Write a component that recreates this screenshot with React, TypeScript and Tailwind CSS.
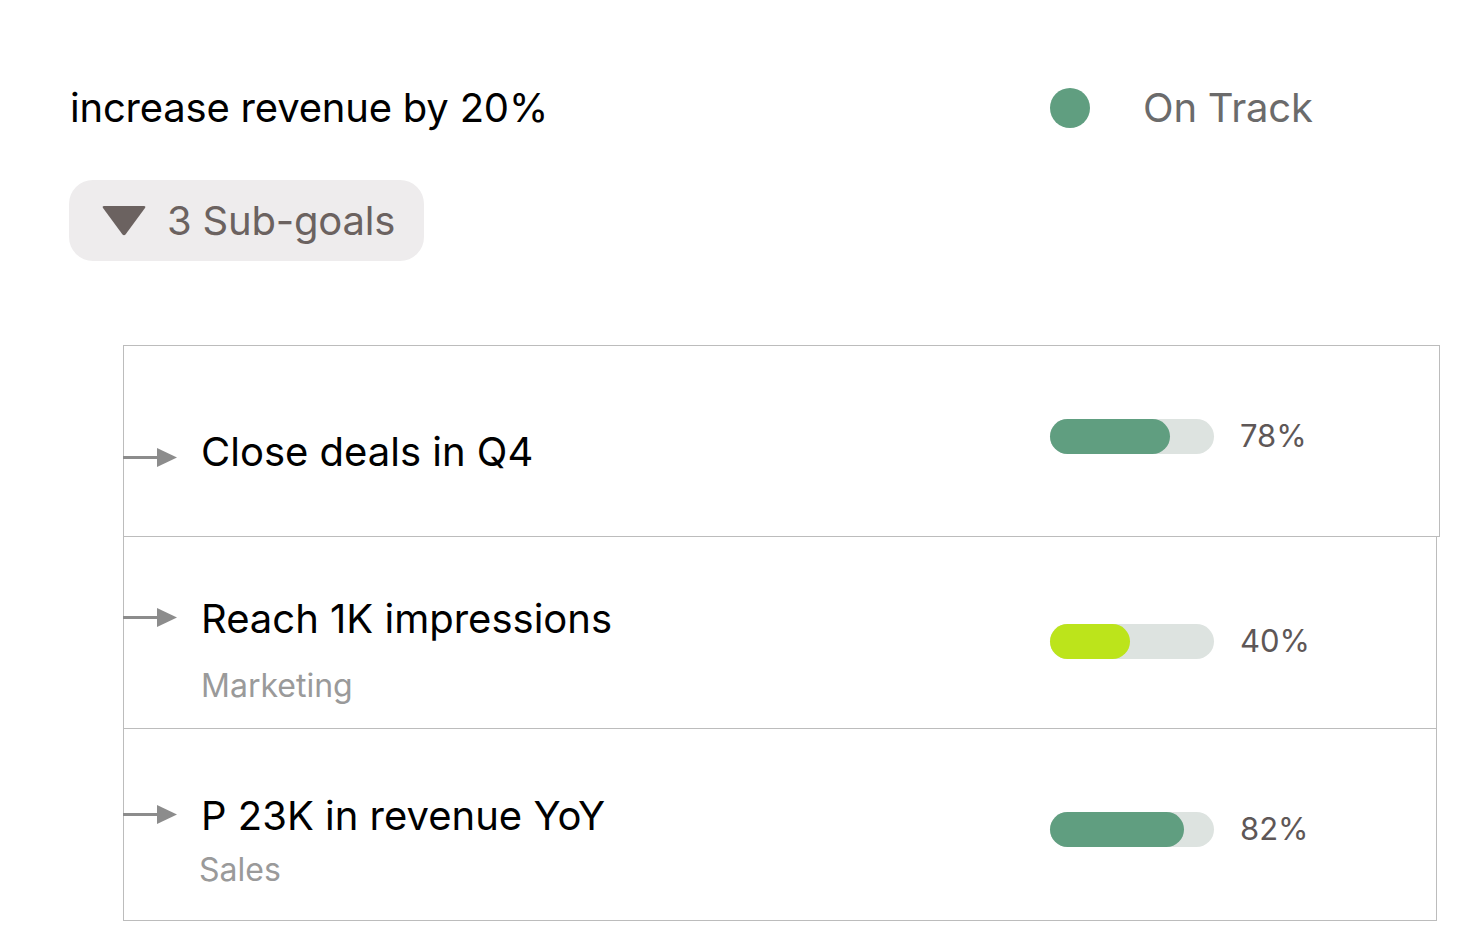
const subGoals = [
  {
    title: "Close deals in Q4",
    team: "",
    pct: "78%",
    fill: 120,
    color: "bg-[#609e80]",
    card: "w-[1317px] border",
    titleTop: "pt-[82px]",
    arrowTop: "mt-[20px]",
    teamTop: "",
    barTop: "pt-[70px]",
  },
  {
    title: "Reach 1K impressions",
    team: "Marketing",
    pct: "40%",
    fill: 80,
    color: "bg-[#bce41b]",
    card: "w-[1314px] border border-t-0",
    titleTop: "pt-[58px]",
    arrowTop: "mt-[13px]",
    teamTop: "mt-[23px] ml-0",
    barTop: "pt-[84px]",
  },
  {
    title: "P 23K in revenue YoY",
    team: "Sales",
    pct: "82%",
    fill: 134,
    color: "bg-[#609e80]",
    card: "w-[1314px] border border-t-0",
    titleTop: "pt-[63px]",
    arrowTop: "mt-[13px]",
    teamTop: "mt-[10px] -ml-[2px]",
    barTop: "pt-[80px]",
  },
];

function Arrow({ className }: { className: string }) {
  return (
    <svg width="54" height="20" viewBox="0 0 54 20" className={`-ml-px shrink-0 ${className}`}>
      <rect x="0" y="8" width="36" height="3" fill="#8c8c8c" />
      <polygon points="34,0 54,9.5 34,19" fill="#8c8c8c" />
    </svg>
  );
}

export default function App() {
  return (
    <div className="min-h-[936px] w-[1464px] bg-white font-['Inter','Liberation_Sans',sans-serif]">
      {/* Goal header */}
      <div className="flex items-center pt-[84px]">
        <div className="w-[1050px] pl-[70px] text-[40px] leading-[48px] tracking-[-0.2px] text-black">
          increase revenue by 20%
        </div>
        <div className="h-10 w-10 rounded-full bg-[#609e80]" />
        <div className="ml-[53px] text-[40px] leading-[48px] tracking-[-0.2px] text-[#6b6b6b]">On Track</div>
      </div>

      {/* Sub-goals toggle */}
      <button
        type="button"
        className="ml-[69px] mt-[48px] flex h-[81px] w-[355px] items-center rounded-[24px] bg-[#eeeced] pl-[33px]"
      >
        <svg width="44" height="31" viewBox="0 0 44 31">
          <path d="M2 1 H42 Q44 1 43 3 L23.5 29.5 Q22 31 20.5 29.5 L1 3 Q0 1 2 1 Z" fill="#6b6260" />
        </svg>
        <span className="ml-[21px] text-[40px] leading-[48px] tracking-[-0.2px] text-[#6b6260]">3 Sub-goals</span>
      </button>

      {/* Sub-goal list */}
      <div className="ml-[123px] mt-[84px]">
        {subGoals.map((g) => (
          <div key={g.title} className={`flex h-[192px] border-[#bcbcbc] ${g.card}`}>
            <div className={`w-[926px] ${g.titleTop}`}>
              <div className="flex items-start">
                <Arrow className={g.arrowTop} />
                <div className="ml-[24px] flex flex-col">
                  <span className="text-[40px] leading-[48px] text-black">{g.title}</span>
                  {g.team && (
                    <span className={`text-[32px] leading-[40px] text-[#9a9a9a] ${g.teamTop}`}>
                      {g.team}
                    </span>
                  )}
                </div>
              </div>
            </div>
            <div className={g.barTop}>
              <div className="flex items-center">
                <div className="h-[35px] w-[164px] rounded-full bg-[#dde3e0]">
                  <div className={`h-full rounded-full ${g.color}`} style={{ width: g.fill }} />
                </div>
                <span className="ml-[26px] text-[31px] leading-[40px] text-[#5e5757]">{g.pct}</span>
              </div>
            </div>
          </div>
        ))}
      </div>
    </div>
  );
}
